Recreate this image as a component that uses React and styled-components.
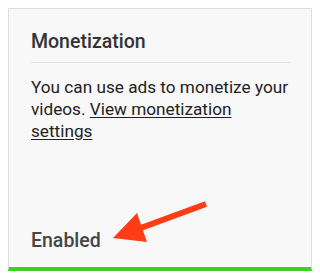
import styled, { createGlobalStyle } from 'styled-components';

const Global = createGlobalStyle`
  body {
    margin: 0;
    background: #ffffff;
    font-family: Roboto, "Liberation Sans", sans-serif;
  }
`;

const Page = styled.div`
  padding: 8px 8px 0 8px;
  width: 320px;
  height: 275px;
  box-sizing: border-box;
  position: relative;
`;

const Card = styled.div`
  box-sizing: border-box;
  width: 304px;
  height: 263px;
  background: #f8f8f8;
  border: 1px solid #dedede;
  border-bottom: 4px solid #3fcf2a;
  padding: 21px 20px 0 22px;
  display: flex;
  flex-direction: column;
`;

const Title = styled.h2`
  margin: 0;
  font-size: 19.5px;
  font-weight: 500;
  color: #333333;
  line-height: 24px;
  padding: 0 0 8px;
  border-bottom: 1px solid #e3e3e3;
`;

const Body = styled.p`
  margin: 13px 0 0;
  font-size: 17.2px;
  line-height: 22px;
  color: #222222;
`;

const Link = styled.a`
  color: #222222;
  text-decoration: underline;
  text-underline-offset: 2px;
`;

const Status = styled.div`
  margin-top: auto;
  margin-bottom: 14px;
  font-size: 19.5px;
  line-height: 24px;
  font-weight: 500;
  color: #444444;
`;

const Arrow = styled.svg`
  position: absolute;
  left: 0;
  top: 0;
  pointer-events: none;
`;

export default function App() {
  return (
    <Page>
      <Global />
      <Card>
        <Title>Monetization</Title>
        <Body>
          You can use ads to monetize your videos.{' '}
          <Link href="#">View monetization settings</Link>
        </Body>
        <Status>Enabled</Status>
      </Card>
      <Arrow width="320" height="275" viewBox="0 0 320 275">
        <line x1="206" y1="204" x2="138" y2="229" stroke="#ff3d14" strokeWidth="6" />
        <polygon points="113,238 137,213 147,242" fill="#ff3d14" />
      </Arrow>
    </Page>
  );
}
